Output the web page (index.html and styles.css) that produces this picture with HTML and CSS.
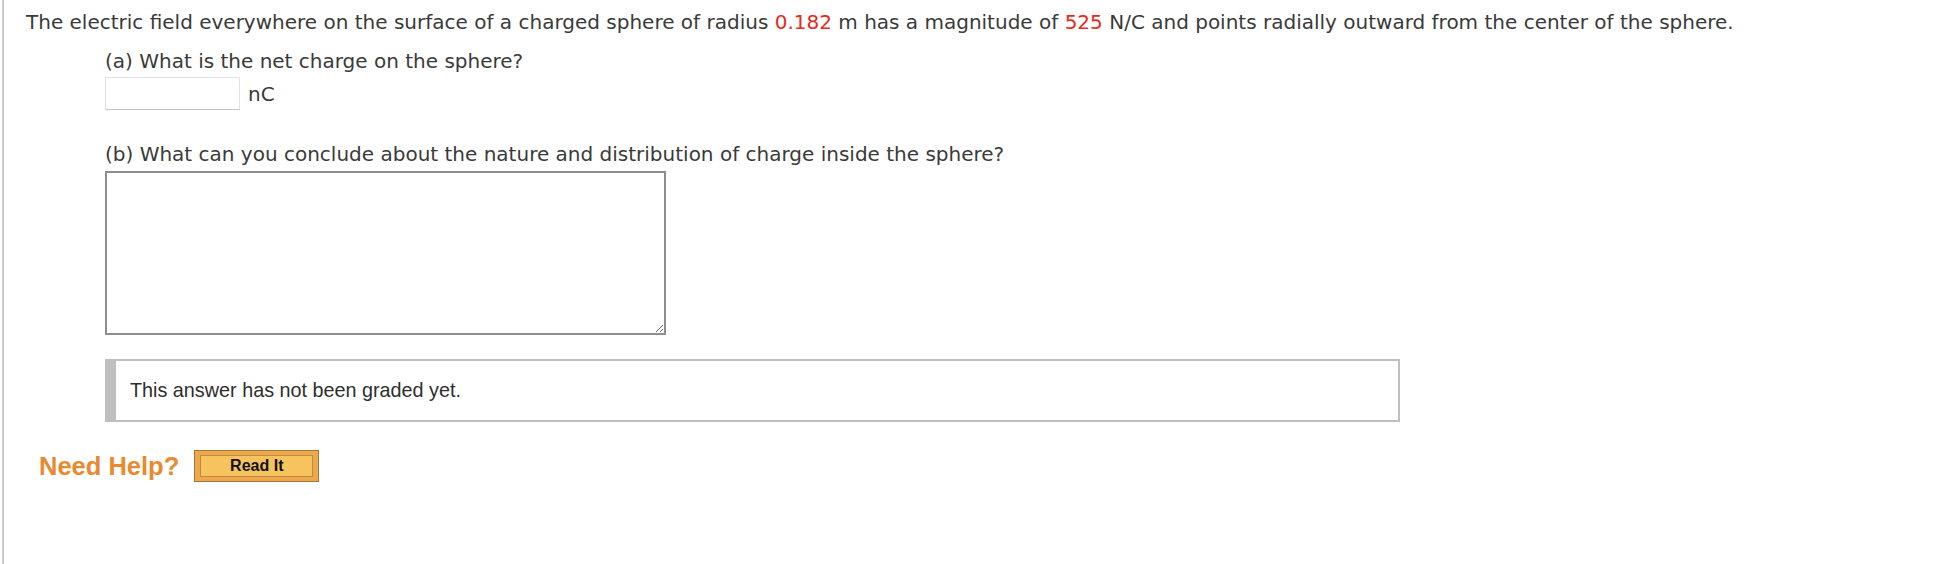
FILE: index.html
```html
<!DOCTYPE html>
<html>
<head>
<meta charset="utf-8">
<link rel="stylesheet" href="styles.css">
</head>
<body>
<div class="page">
  <p class="intro">The electric field everywhere on the surface of a charged sphere of radius <span class="val">0.182</span> m has a magnitude of <span class="val">525</span> N/C and points radially outward from the center of the sphere.</p>
  <div class="parts">
    <p class="q qa">(a) What is the net charge on the sphere?</p>
    <div class="answer-row">
      <input class="num" type="text">
      <span class="unit">nC</span>
    </div>
    <p class="q qb">(b) What can you conclude about the nature and distribution of charge inside the sphere?</p>
    <textarea class="essay"></textarea>
    <div class="graded">This answer has not been graded yet.</div>
  </div>
  <div class="help">
    <span class="need">Need Help?</span>
    <button class="read"><span class="read-inner">Read It</span></button>
  </div>
</div>
</body>
</html>
```

FILE: styles.css
```css
html, body {
  margin: 0;
  padding: 0;
  background: #fff;
}
.page {
  margin-left: 2px;
  border-left: 2px solid #cccccc;
  min-height: 564px;
  box-sizing: border-box;
  padding: 10px 0 0 22px;
  font-family: "DejaVu Sans", Verdana, sans-serif;
  font-size: 20px;
  color: #3a3a3a;
}
.intro {
  margin: 0;
  line-height: 24px;
}
.val {
  color: #e8291c;
}
.parts {
  margin-left: 79px;
}
.q {
  margin: 0;
  line-height: 24px;
}
.qa {
  margin-top: 15px;
}
.answer-row {
  display: flex;
  align-items: center;
  gap: 8px;
  margin-top: 4px;
  height: 33px;
}
.num {
  width: 135px;
  height: 33px;
  box-sizing: border-box;
  border: 1px solid #e2e2e2;
  border-bottom-color: #c4c4c4;
  border-radius: 1px;
  margin: 0;
  padding: 0 4px;
}
.unit {
  line-height: 24px;
}
.qb {
  margin-top: 32px;
}
.essay {
  display: block;
  margin-top: 5px;
  width: 561px;
  height: 164px;
  box-sizing: border-box;
  border: 2px solid #8e8e8e;
  padding: 2px;
  resize: both;
}
.graded {
  margin-top: 24px;
  width: 1295px;
  height: 63px;
  box-sizing: border-box;
  border: 2px solid #bfbfbf;
  border-left: 11px solid #bfbfbf;
  padding-left: 14px;
  display: flex;
  align-items: center;
  font-family: "Liberation Sans", Arial, Helvetica, sans-serif;
  font-size: 19.8px;
  color: #2e2e2e;
}
.help {
  display: flex;
  align-items: center;
  gap: 15px;
  margin-top: 28px;
  margin-left: 13px;
}
.need {
  font-family: "Liberation Sans", Arial, Helvetica, sans-serif;
  font-weight: bold;
  font-size: 25.5px;
  color: #e88a30;
  line-height: 32px;
}
.read {
  width: 125px;
  height: 32px;
  box-sizing: border-box;
  border: 1px solid #a6773d;
  background: #efa848;
  padding: 4px 5px;
  margin: 0;
  display: flex;
}
.read-inner {
  flex: 1;
  display: flex;
  align-items: center;
  justify-content: center;
  border: 1px solid #b88a4e;
  background: #f6c35d;
  font-family: "Liberation Sans", Arial, Helvetica, sans-serif;
  font-weight: bold;
  font-size: 16px;
  color: #111;
}
```
